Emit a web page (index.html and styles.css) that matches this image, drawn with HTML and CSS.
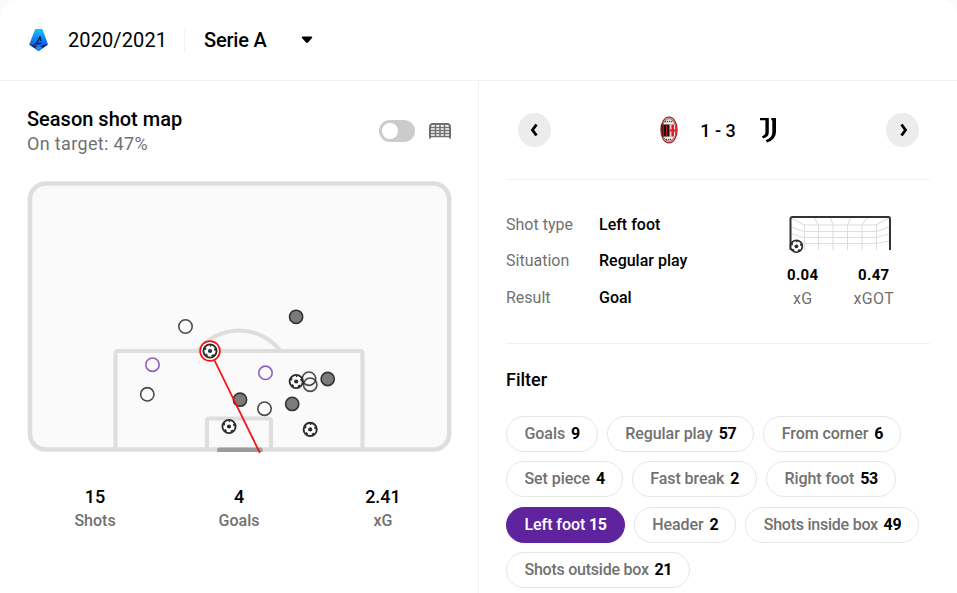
FILE: index.html
```html
<!DOCTYPE html>
<html lang="en">
<head>
  <meta charset="UTF-8" />
  <meta name="viewport" content="width=device-width, initial-scale=1.0"/>
  <title>Season shot map</title>
  <link rel="stylesheet" href="styles.css">
</head>
<body>
  <!-- shared shapes -->
  <svg class="defs" width="0" height="0">
    <defs>
      <g id="ball">
        <circle r="6.6" fill="#fff" stroke="#2c2c2c" stroke-width="1.9"/>
        <circle r="2.1" fill="#2c2c2c"/>
        <circle r="5.3" fill="none" stroke="#2c2c2c" stroke-width="1.7" stroke-dasharray="2.4 4.26" stroke-dashoffset="1.2" transform="rotate(-90)"/>
      </g>
      <circle id="miss" r="6.7" fill="none" stroke="#2c2c2c" stroke-opacity=".85" stroke-width="1.6"/>
      <circle id="block" r="6.6" fill="#7b7b7b" stroke="#333" stroke-width="1.6"/>
      <circle id="post" r="6.7" fill="none" stroke="#925fc0" stroke-width="1.6"/>
    </defs>
  </svg>

  <div class="card">
    <header class="top">
      <svg class="league" width="22" height="24" viewBox="0 0 22 24">
        <defs>
          <linearGradient id="blue" x1="0" y1="0" x2="0" y2="1">
            <stop offset="0" stop-color="#19c3fa"/>
            <stop offset=".55" stop-color="#0a78f5"/>
            <stop offset="1" stop-color="#0b55dc"/>
          </linearGradient>
        </defs>
        <path d="M7.2 1h7.2l5.600 15.600-9.400 6.200-9.400-6.200z" fill="url(#blue)"/>
        <path d="M1.200 16.600l5 .2 4.600 3 4.400-3 4.800-.2-9.400 6.400z" fill="#25205e"/>
        <path d="M10.800 17.400l4 2.600-4 3-4-3z" fill="#1489f5"/>
        <path d="M12 8.500Q10.500 13 7.600 15.800l6-.6M12 8.500l.8 4.500" fill="none" stroke="#12245c" stroke-width="1.500"/>
      </svg>
      <span class="season">2020/2021</span>
      <span class="divider"></span>
      <span class="league-name">Serie A</span>
      <svg class="caret" width="12" height="8" viewBox="0 0 12 8"><path d="M1.700.6h8.600c1 0 1.200.9.700 1.500L7 6.600c-.6.6-1.400.6-2 0L1 2.100C.5 1.500.7.600 1.700.600z"/></svg>
    </header>

    <main class="columns">
      <section class="map">
        <div class="map-head">
          <div>
            <h2>Season shot map</h2>
            <p>On target: 47%</p>
          </div>
          <div class="controls">
            <span class="toggle"></span>
            <svg width="22" height="16" viewBox="0 0 22 16" fill="none" stroke="#717171">
              <path d="M1 15.500V4q0-3 3-3h14q3 0 3 3v11.500" stroke-width="2"/>
              <path d="M2 4.500h18M2 7.500h18M2 10.500h18M2 13.500h18" stroke-width="1.400"/>
              <path d="M6.500 2v12M11 2v12M15.500 2v12" stroke-width="1.500"/>
            </svg>
          </div>
        </div>

        <svg class="pitch" width="425" height="274" viewBox="27 181 425 274">
          <rect x="29.900" y="183.500" width="419.300" height="266" rx="16" fill="#fafafa" stroke="#dedede" stroke-width="4.600"/>
          <g fill="none" stroke="#dedede" stroke-width="4.200">
            <path d="M115.500 449V353.500q0-2.500 2.500-2.500h242q2.500 0 2.500 2.500V449"/>
            <path d="M207 449V421q0-2.500 2.500-2.500h59q2.500 0 2.500 2.500v28"/>
            <path d="M198 350.500a52 52 0 0 1 82 0"/>
          </g>
          <path d="M217 452v-2q0-2.500 2.500-2.500h41q2 0 2 2v2.500z" fill="#9b9b9b"/>

          <use href="#miss" x="185.500" y="326.500"/>
          <use href="#miss" x="147.300" y="394.300"/>
          <use href="#miss" x="264.500" y="408.700"/>
          <use href="#post" x="152.500" y="364.700"/>
          <use href="#post" x="265.500" y="372.800"/>
          <use href="#block" x="296.100" y="316.800"/>
          <use href="#block" x="327.700" y="379"/>
          <use href="#block" x="292.200" y="403.900"/>
          <use href="#block" x="240" y="399.700"/>
          <use href="#ball" x="229" y="426.500"/>
          <use href="#ball" x="310.200" y="429.400"/>
          <use href="#ball" x="296.200" y="381.500"/>
          <use href="#miss" x="309" y="378.700"/>
          <use href="#miss" x="310.200" y="384.700"/>

          <!-- selected shot -->
          <path d="M214.500 360.300l45.300 92.500" stroke="#fb0d0d" stroke-width="1.700"/>
          <circle cx="210" cy="351" r="9.900" fill="#fff" stroke="#fb0d0d" stroke-width="1.700"/>
          <use href="#ball" x="210" y="351"/>
        </svg>

        <div class="totals">
          <div><b>15</b><span>Shots</span></div>
          <div><b>4</b><span>Goals</span></div>
          <div><b>2.41</b><span>xG</span></div>
        </div>
      </section>

      <section class="detail">
        <div class="match">
          <button class="round" aria-label="Previous shot">
            <svg width="12" height="14" viewBox="0 0 12 14"><path d="M7.500 1.500L3.500 7l4 5.500"/></svg>
          </button>
          <div class="score">
            <svg width="18" height="28" viewBox="0 0 18 28">
              <ellipse cx="9" cy="14" rx="8.100" ry="12.900" fill="#f3efef" stroke="#b51c24" stroke-width="1.300"/>
              <ellipse cx="9" cy="14" rx="6.800" ry="11.400" fill="none" stroke="#555" stroke-width=".8"/>
              <path d="M1.500 8.500h7.800v12H2.300Q.8 14 1.500 8.500z" fill="#171010"/>
              <path d="M3.300 8.500v12M6.600 8.500v12" stroke="#c0141e" stroke-width="1.300"/>
              <path d="M9.300 8.500h7.200q.8 6-.6 12H9.300z" fill="#e31b26"/>
              <path d="M10.800 8.500v5M14.600 8.500v5M10.800 15.500v5M14.600 15.500v5" stroke="#fff" stroke-width="1.100"/>
              <path d="M5 5.500h8M6 23.500h6" stroke="#444" stroke-width="1.400" stroke-dasharray="1.200 .8"/>
            </svg>
            <span>1 - 3</span>
            <svg width="18" height="26" viewBox="0 0 18 26">
              <path d="M1 1h8.800v14.500q0 4.500-5.800 6l-1-2.300q3.400-1.200 3.400-4V3.300H1z"/>
              <path d="M12.300 1H17v14q0 7.500-9 10.500l-1.200-2.300q6.500-2.400 6.500-8V3.300h-1z"/>
            </svg>
          </div>
          <button class="round" aria-label="Next shot">
            <svg width="12" height="14" viewBox="0 0 12 14"><path d="M4.500 1.500l4 5.500-4 5.500"/></svg>
          </button>
        </div>

        <div class="shot">
          <dl>
            <dt>Shot type</dt><dd>Left foot</dd>
            <dt>Situation</dt><dd>Regular play</dd>
            <dt>Result</dt><dd>Goal</dd>
          </dl>
          <div class="goal">
            <svg width="104" height="40" viewBox="0 0 104 40" fill="none">
              <g stroke="#dedede" stroke-width="1.100">
                <path d="M3 4l13 7h72L101 4M16.500 11v25M30.500 11v25M45 11v25M59.500 11v25M74 11v25M88.500 11v25"/>
                <path d="M30.500 11l-4-7M45 11l-2.500-7M59.500 11l3-7M74 11l5-7"/>
                <path d="M3 13l13 4.500h72l13-4.500M3 20l13 3.500h72l13-3.500M3 27l13 2.500h72l13-2.500"/>
              </g>
              <path d="M2.500 36V5q0-2 2-2h96q1.500 0 1.500 2v31" stroke="#333" stroke-width="2"/>
              <use href="#ball" transform="translate(8.400 32.300) scale(.9)"/>
            </svg>
            <div class="xg">
              <div><b>0.04</b><span>xG</span></div>
              <div><b>0.47</b><span>xGOT</span></div>
            </div>
          </div>
        </div>

        <div class="filter">
          <h3>Filter</h3>
          <div class="chips">
            <a class="chip">Goals <b>9</b></a>
            <a class="chip">Regular play <b>57</b></a>
            <a class="chip">From corner <b>6</b></a>
            <a class="chip">Set piece <b>4</b></a>
            <a class="chip">Fast break <b>2</b></a>
            <a class="chip">Right foot <b>53</b></a>
            <a class="chip active">Left foot <b>15</b></a>
            <a class="chip">Header <b>2</b></a>
            <a class="chip long">Shots inside box <b>49</b></a>
            <a class="chip long">Shots outside box <b>21</b></a>
          </div>
        </div>
      </section>
    </main>
  </div>
</body>
</html>
```

FILE: styles.css
```css
* {
  box-sizing: border-box;
}

body {
  margin: 0;
  background: #fafafa;
  font-family: Roboto, "Liberation Sans", sans-serif;
  font-size: 16px;
  font-weight: 500;
  color: #000;
  overflow: hidden;
}

.defs {
  display: block;
}

.card {
  height: 593px;
  background: #fff;
  border-radius: 16px 16px 0 0;
}

/* Top bar */
.top {
  display: flex;
  align-items: center;
  height: 81px;
  padding-left: 28px;
  border-bottom: 1px solid #f2f2f2;
  font-size: 20px;
}

.season {
  margin-left: 18px;
  width: 99px;
  font-weight: 400;
  letter-spacing: 0.1px;
}

.divider {
  width: 1px;
  height: 23px;
  margin: 0 19px 0 17px;
  background: #f2f2f2;
}

.league-name {
  width: 63px;
  white-space: nowrap;
  letter-spacing: -0.2px;
}

.caret {
  margin-left: 34px;
}

.columns {
  display: grid;
  grid-template-columns: 479px 1fr;
  height: 512px;
}

/* Left column */
.map {
  padding: 26px 27px 0;
  border-right: 1px solid #f2f2f2;
}

.map-head {
  display: flex;
  justify-content: space-between;
  height: 74px;
}

h2 {
  margin: 0;
  font-size: 20px;
  font-weight: 500;
  line-height: 25px;
}

p {
  margin: 0;
  font-size: 18px;
  font-weight: 400;
  line-height: 24px;
  letter-spacing: 0.35px;
  color: #717171;
}

.controls {
  display: flex;
  align-items: center;
  gap: 14px;
  height: 48px;
}

.toggle {
  width: 36px;
  height: 22px;
  padding: 3px;
  border-radius: 11px;
  background: #cbcbcb;
}

.toggle::before {
  content: "";
  display: block;
  width: 16px;
  height: 16px;
  border-radius: 50%;
  background: #fff;
}

.pitch {
  display: block;
}

.totals {
  display: grid;
  grid-template-columns: repeat(3, 1fr);
  width: 432px;
  margin: 30px 0 0 -4px;
  text-align: center;
}

.totals b,
.totals span {
  display: block;
  font-weight: 500;
  line-height: 24px;
}

.totals b {
  font-size: 18px;
}

.totals span {
  color: #717171;
}

/* Right column */
.detail {
  padding: 0 27px;
}

.match {
  display: flex;
  align-items: center;
  justify-content: space-between;
  height: 99px;
  padding: 0 11px 0 12px;
  border-bottom: 1px solid #f2f2f2;
}

.round {
  display: flex;
  align-items: center;
  justify-content: center;
  width: 33px;
  height: 34px;
  padding: 0;
  border: none;
  border-radius: 50%;
  background: #ececec;
}

.round path {
  fill: none;
  stroke: #000;
  stroke-width: 2.8;
}

.score {
  display: flex;
  align-items: center;
  font-size: 18px;
}

.score span {
  margin: 0 23px 0 22px;
}

.shot {
  display: flex;
  justify-content: space-between;
  height: 164px;
  padding: 26px 32px 0 0;
  border-bottom: 1px solid #f2f2f2;
}

dl {
  display: grid;
  grid-template-columns: 93px 1fr;
  grid-auto-rows: 36.5px;
  align-items: center;
  margin: 0;
}

dt {
  font-weight: 400;
  color: #717171;
}

dd {
  margin: 0;
}

.goal {
  width: 116px;
  padding-top: 8px;
}

.goal svg {
  display: block;
  margin-left: 6px;
}

.xg {
  display: flex;
  justify-content: space-between;
  margin-top: 9px;
  padding: 0 4px 0 5px;
  text-align: center;
}

.xg b,
.xg span {
  display: block;
  line-height: 24px;
}

.xg b {
  font-size: 15px;
  font-weight: 700;
  letter-spacing: 0.3px;
}

.xg span {
  font-weight: 400;
  letter-spacing: 0.3px;
  color: #717171;
}

.filter {
  padding-top: 24px;
}

h3 {
  margin: 0 0 24px;
  font-size: 18px;
  font-weight: 500;
  line-height: 24px;
}

.chips {
  display: flex;
  flex-wrap: wrap;
  gap: 9.3px 9px;
}

.chip {
  height: 36px;
  padding: 0 17px 0 17.5px;
  border: 1px solid #e6e6e6;
  border-radius: 18px;
  line-height: 34px;
  white-space: nowrap;
  letter-spacing: -0.07px;
  color: #717171;
}

.chip.long {
  letter-spacing: -0.24px;
}

.chip b {
  margin-left: 2px;
  font-weight: 700;
  letter-spacing: -0.4px;
  color: #000;
}

.chip.active {
  background: #5e239d;
  border-color: #5e239d;
}

.chip.active b {
  margin-left: 0;
}

.chip.active,
.chip.active b {
  color: #fff;
}
```
